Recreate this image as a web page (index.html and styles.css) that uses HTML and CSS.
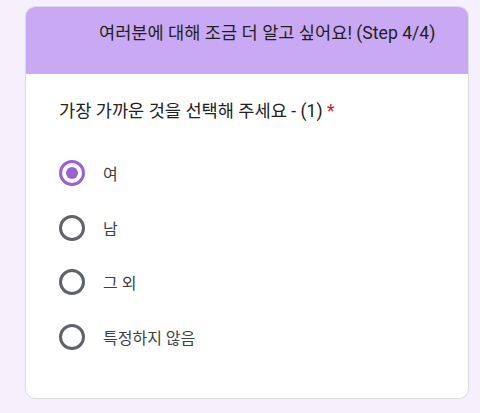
FILE: index.html
```html
<!DOCTYPE html>
<html lang="ko">
  <head>
    <meta charset="UTF-8" />
    <meta name="viewport" content="width=device-width, initial-scale=1.0" />
    <title>Step 4/4</title>
    <link rel="stylesheet" href="styles.css">
  </head>
  <body>
    <main class="card">
      <div class="card-header">여러분에 대해 조금 더 알고 싶어요! (Step 4/4)</div>
      <div class="card-body">
        <p class="question">가장 가까운 것을 선택해 주세요 - (1) <span class="required">*</span></p>
        <div class="options">
          <label class="option">
            <span class="radio checked"></span>
            <span class="option-label">여</span>
          </label>
          <label class="option">
            <span class="radio"></span>
            <span class="option-label">남</span>
          </label>
          <label class="option">
            <span class="radio"></span>
            <span class="option-label">그 외</span>
          </label>
          <label class="option">
            <span class="radio"></span>
            <span class="option-label">특정하지 않음</span>
          </label>
        </div>
      </div>
    </main>
  </body>
</html>
```

FILE: styles.css
```css
* {
  box-sizing: border-box;
}

body {
  margin: 0;
  background-color: #f5f0fc;
  font-family: Roboto, "Noto Sans CJK KR", sans-serif;
  color: #202124;
}

.card {
  width: 444px;
  margin: 6px 0 0 25px;
  background-color: #fff;
  border: 1px solid #dcdce0;
  border-radius: 10px;
  overflow: hidden;
}

.card-header {
  height: 67px;
  padding: 15px 0 0 73px;
  background-color: #caa9f4;
  font-size: 17.6px;
  line-height: 22px;
  color: #1f1f1f;
}

.card-body {
  padding: 26px 0 48px 33px;
}

.question {
  margin: 0 0 38px;
  font-size: 17.6px;
  line-height: 22px;
  color: #202124;
}

.required {
  color: #c5221f;
}

.options {
  display: flex;
  flex-direction: column;
  gap: 28.5px;
}

.option {
  display: flex;
  align-items: center;
  gap: 18px;
  height: 26px;
}

.radio {
  width: 26px;
  height: 26px;
  border: 3px solid #5f6368;
  border-radius: 50%;
  display: flex;
  align-items: center;
  justify-content: center;
}

.radio.checked {
  border-color: #9a60d4;
}

.radio.checked::after {
  content: "";
  width: 12px;
  height: 12px;
  border-radius: 50%;
  background-color: #9a60d4;
}

.option-label {
  font-size: 16px;
  color: #3c4043;
}
```
